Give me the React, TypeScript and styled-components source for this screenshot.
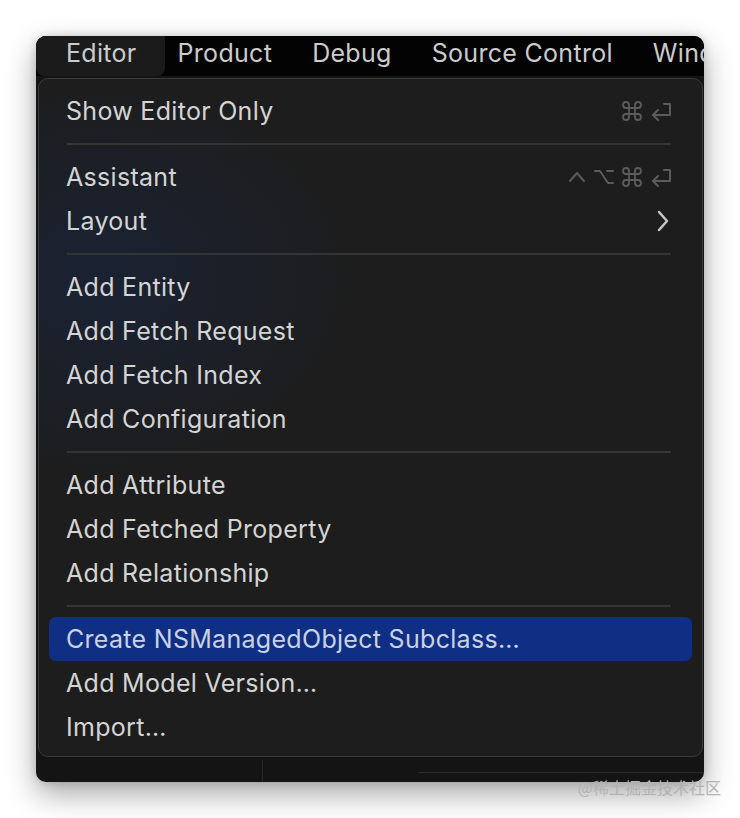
import React from 'react'
import styled, { createGlobalStyle } from 'styled-components'

const GlobalStyle = createGlobalStyle`
    html, body {
        margin: 0;
        padding: 0;
        background: #ffffff;
    }
    body {
        font-family: Inter, "Noto Sans", sans-serif;
        -webkit-font-smoothing: antialiased;
    }
`

const Page = styled.div`
    position: relative;
    width: 740px;
    height: 818px;
    padding: 36px 36px 0 36px;
    box-sizing: border-box;
`

const Window = styled.div`
    width: 668px;
    height: 746px;
    background: #141414;
    border-radius: 10px;
    overflow: hidden;
    display: flex;
    flex-direction: column;
    box-shadow: 0 12px 30px rgba(0, 0, 0, 0.35), 0 0 10px rgba(0, 0, 0, 0.15);
`

const MenuBar = styled.div`
    height: 40px;
    flex: none;
    display: flex;
    align-items: stretch;
    background: #030303;
    white-space: nowrap;
    overflow: hidden;
`

const MenuTitle = styled.div<{ $active?: boolean }>`
    display: flex;
    align-items: center;
    padding: ${p => (p.$active ? '0 28px 7px 30px' : '0 20px 7px')};
    margin-right: ${p => (p.$active ? '-7px' : '0')};
    background: ${p => (p.$active ? '#1b1b1b' : 'transparent')};
    border-radius: 0 0 8px 8px;
    color: #cbcbcb;
    font-size: 25px;
    letter-spacing: 0.3px;
`

const Panel = styled.div`
    margin: 2px 1px 0 2px;
    height: 679px;
    flex: none;
    box-sizing: border-box;
    padding: 10px 0 7px;
    border: 1px solid #3b3b3b;
    border-radius: 10px;
    background:
        radial-gradient(ellipse 260px 200px at 60px 200px, rgba(22, 40, 78, 0.45), transparent),
        #1d1d1d;
    display: flex;
    flex-direction: column;
`

const Row = styled.div<{ $selected?: boolean }>`
    height: 44px;
    flex: none;
    margin: 0 10px;
    padding: 0 20px 0 17px;
    display: flex;
    align-items: center;
    justify-content: space-between;
    border-radius: 7px;
    background: ${p => (p.$selected ? '#0f2f85' : 'transparent')};
    color: ${p => (p.$selected ? '#c9d2e4' : '#d4d4d4')};
    font-size: 25px;
    letter-spacing: 0.3px;
`

const Separator = styled.div`
    height: 22px;
    flex: none;
    display: flex;
    align-items: center;
    padding: 0 31px 0 28px;
    &::after {
        content: '';
        flex: 1;
        height: 2px;
        background: #343434;
    }
`

const Keys = styled.div`
    display: flex;
    align-items: center;
    gap: 8px;
    color: #5b5b5b;
`

const Bottom = styled.div`
    flex: 1;
    display: flex;
`

const BottomLeft = styled.div`
    width: 226px;
    border-right: 1px solid #262626;
    margin-top: 3px;
`

const BottomRight = styled.div`
    flex: 1;
    display: flex;
    flex-direction: column;
    justify-content: center;
    padding-left: 155px;
    &::after {
        content: '';
        height: 1px;
        background: #2a2a2a;
        margin-top: 6px;
    }
`

const Watermark = styled.div`
    position: absolute;
    right: 19px;
    top: 775px;
    font-family: "Noto Sans CJK SC", sans-serif;
    font-size: 16px;
    color: #b3b3b3;
`

const svgProps = {
    fill: 'none',
    stroke: 'currentColor',
    strokeWidth: 2,
    strokeLinecap: 'round' as const,
    strokeLinejoin: 'round' as const,
}

const ControlKey = () => (
    <svg width="18" height="20" viewBox="0 0 18 20" {...svgProps}>
        <path d="M2 14l7-8 7 8" />
    </svg>
)

const OptionKey = () => (
    <svg width="20" height="20" viewBox="0 0 20 20" {...svgProps}>
        <path d="M1 4h5l8 12h5" />
        <path d="M13 4h6" />
    </svg>
)

const CommandKey = () => (
    <svg width="20" height="20" viewBox="2 2 20 20" {...svgProps} strokeWidth={1.8}>
        <path d="M15 6v12a3 3 0 1 0 3-3H6a3 3 0 1 0 3 3V6a3 3 0 1 0-3 3h12a3 3 0 1 0-3-3" />
    </svg>
)

const ReturnKey = () => (
    <svg width="22" height="20" viewBox="0 0 22 20" {...svgProps}>
        <path d="M14 3h6v11H3" />
        <path d="M8 9l-5 5 5 5" />
    </svg>
)

const SubmenuArrow = () => (
    <svg width="16" height="22" viewBox="0 0 16 22" {...svgProps} stroke="#c6c6c6" strokeWidth={2.5}>
        <path d="M3 2l8 9-8 9" />
    </svg>
)

type Item = { label: string; keys?: 'cmd' | 'assist'; sub?: boolean; selected?: boolean }

const groups: Item[][] = [
    [{ label: 'Show Editor Only', keys: 'cmd' }],
    [{ label: 'Assistant', keys: 'assist' }, { label: 'Layout', sub: true }],
    [
        { label: 'Add Entity' },
        { label: 'Add Fetch Request' },
        { label: 'Add Fetch Index' },
        { label: 'Add Configuration' },
    ],
    [
        { label: 'Add Attribute' },
        { label: 'Add Fetched Property' },
        { label: 'Add Relationship' },
    ],
    [
        { label: 'Create NSManagedObject Subclass…', selected: true },
        { label: 'Add Model Version…' },
        { label: 'Import…' },
    ],
]

const renderKeys = (item: Item) => {
    if (item.sub) return <SubmenuArrow />
    if (!item.keys) return null
    return (
        <Keys>
            {item.keys === 'assist' && <ControlKey />}
            {item.keys === 'assist' && <OptionKey />}
            <CommandKey />
            <ReturnKey />
        </Keys>
    )
}

export default function App() {
    return (
        <Page>
            <GlobalStyle />
            <Window>
                <MenuBar>
                    <MenuTitle $active>Editor</MenuTitle>
                    <MenuTitle>Product</MenuTitle>
                    <MenuTitle>Debug</MenuTitle>
                    <MenuTitle>Source Control</MenuTitle>
                    <MenuTitle>Window</MenuTitle>
                </MenuBar>
                <Panel>
                    {groups.map((group, gi) => (
                        <React.Fragment key={gi}>
                            {gi > 0 && <Separator />}
                            {group.map(item => (
                                <Row key={item.label} $selected={item.selected}>
                                    <span>{item.label}</span>
                                    {renderKeys(item)}
                                </Row>
                            ))}
                        </React.Fragment>
                    ))}
                </Panel>
                <Bottom>
                    <BottomLeft />
                    <BottomRight />
                </Bottom>
            </Window>
            <Watermark>@稀土掘金技术社区</Watermark>
        </Page>
    )
}
